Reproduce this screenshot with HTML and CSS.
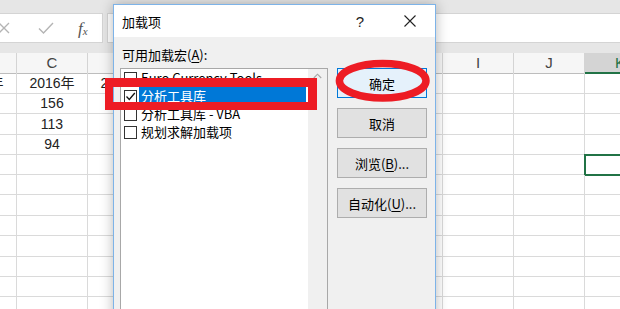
FILE: index.html
```html
<!DOCTYPE html>
<html lang="zh-CN">
<head>
<meta charset="utf-8">
<title>加载项</title>
<link rel="stylesheet" href="styles.css">
</head>
<body>
<div class="app">
  <div class="topstrip"></div>
  <div class="fbar">
    <div class="fbtns">
      <svg class="ico ico-x" width="12" height="12" viewBox="0 0 12 12"><path d="M1 1L11 11M11 1L1 11" stroke="#b4b4b4" stroke-width="1.3" fill="none"/></svg>
      <svg class="ico ico-ok" width="16" height="12" viewBox="0 0 16 12"><path d="M1 6.5L5.5 11L15 1" stroke="#b4b4b4" stroke-width="1.4" fill="none"/></svg>
      <span class="fx">f<sub>x</sub></span>
    </div>
    <div class="finput"></div>
  </div>
  <div class="gap"></div>
  <div class="sheet">
    <div class="row head"><div>B</div><div>C</div><div>D</div><div>E</div><div>F</div><div>G</div><div>H</div><div>I</div><div>J</div><div class="sel">K</div></div>
    <div class="row"><div>2015年</div><div>2016年</div><div>2017年</div><div></div><div></div><div></div><div></div><div></div><div></div><div></div></div>
    <div class="row"><div></div><div>156</div><div></div><div></div><div></div><div></div><div></div><div></div><div></div><div></div></div>
    <div class="row"><div></div><div>113</div><div></div><div></div><div></div><div></div><div></div><div></div><div></div><div></div></div>
    <div class="row"><div></div><div>94</div><div></div><div></div><div></div><div></div><div></div><div></div><div></div><div></div></div>
    <div class="row"><div></div><div></div><div></div><div></div><div></div><div></div><div></div><div></div><div></div><div class="active"></div></div>
    <div class="row"><div></div><div></div><div></div><div></div><div></div><div></div><div></div><div></div><div></div><div></div></div>
    <div class="row"><div></div><div></div><div></div><div></div><div></div><div></div><div></div><div></div><div></div><div></div></div>
    <div class="row"><div></div><div></div><div></div><div></div><div></div><div></div><div></div><div></div><div></div><div></div></div>
    <div class="row"><div></div><div></div><div></div><div></div><div></div><div></div><div></div><div></div><div></div><div></div></div>
    <div class="row"><div></div><div></div><div></div><div></div><div></div><div></div><div></div><div></div><div></div><div></div></div>
    <div class="row"><div></div><div></div><div></div><div></div><div></div><div></div><div></div><div></div><div></div><div></div></div>
    <div class="row"><div></div><div></div><div></div><div></div><div></div><div></div><div></div><div></div><div></div><div></div></div>
  </div>

  <div class="dialog">
    <div class="titlebar">
      <span class="title">加载项</span>
      <span class="tb-btn">?</span>
      <span class="tb-btn">
        <svg width="12" height="12" viewBox="0 0 12 12"><path d="M0.5 0.5L11.5 11.5M11.5 0.5L0.5 11.5" stroke="#222" stroke-width="1.1" fill="none"/></svg>
      </span>
    </div>
    <div class="dbody">
      <div class="label">可用加载宏(<u>A</u>):</div>
      <div class="main">
        <div class="listbox">
          <div class="items">
            <div class="item"><span class="cb"></span><span class="txt">Euro Currency Tools</span></div>
            <div class="item selected"><span class="cb">
              <svg width="11" height="11" viewBox="0 0 11 11"><path d="M1.5 5.5L4.3 8.5L9.8 2" stroke="#111" stroke-width="1.3" fill="none"/></svg>
            </span><span class="txt">分析工具库</span></div>
            <div class="item"><span class="cb"></span><span class="txt">分析工具库 - VBA</span></div>
            <div class="item"><span class="cb"></span><span class="txt">规划求解加载项</span></div>
          </div>
          <div class="scroll">
            <svg width="9" height="6" viewBox="0 0 9 6"><path d="M0.8 5L4.5 1.2L8.2 5" stroke="#a6a6a6" stroke-width="1.1" fill="none"/></svg>
          </div>
        </div>
        <div class="buttons">
          <div class="btn default">确定</div>
          <div class="btn">取消</div>
          <div class="btn">浏览(<u>B</u>)...</div>
          <div class="btn">自动化(<u>U</u>)...</div>
        </div>
      </div>
    </div>
  </div>

  <div class="mark-rect"></div>
  <svg class="mark-ellipse" width="104" height="54" viewBox="0 0 104 54">
    <ellipse cx="50.7" cy="26.7" rx="43.3" ry="17.3" fill="none" stroke="#ed1c24" stroke-width="7.5"/>
  </svg>
</div>
</body>
</html>
```
FILE: styles.css
```css
* { box-sizing: border-box; margin: 0; padding: 0; }
html, body { width: 620px; height: 309px; overflow: hidden; background: #fff; }
body { font-family: "Liberation Sans", "Noto Sans CJK SC", sans-serif; }

.app { position: relative; width: 620px; height: 309px; overflow: hidden; background: #fff; }

.topstrip { height: 13px; background: #e6e6e6; }

.fbar { display: flex; gap: 4px; height: 30px; background: #e6e6e6; }
.fbtns {
  width: 103px; background: #fff;
  border: 1px solid #d4d4d4; border-left: none;
  display: flex; align-items: center; position: relative;
}
.ico-x { margin-left: -2px; }
.ico-ok { margin-left: 28px; }
.fx {
  margin-left: 24px; font-family: "Liberation Serif", serif; font-style: italic;
  font-size: 17px; color: #555; line-height: 1;
}
.fx sub { font-size: 11px; vertical-align: -1px; }
.finput { flex: 1; background: #fff; border: 1px solid #d4d4d4; border-right: none; }

.gap { height: 10px; background: #e6e6e6; }

.sheet { margin-left: -54px; }
.row {
  display: grid; grid-template-columns: repeat(10, 71px); height: 20.4px;
}
.row > div {
  border-right: 1px solid #dadada; border-bottom: 1px solid #dadada;
  text-align: center; font-size: 14px; line-height: 20px; color: #222;
  font-family: "Liberation Sans", "Noto Sans CJK SC", sans-serif;
  white-space: nowrap;
}
.row.head { height: 20px; background: #f6f6f6; }
.row.head > div { color: #444; border-right-color: #d4d4d4; border-bottom-color: #bdbdbd; line-height: 19px; font-size: 15px; }
.row.head > div.sel { background: #d4d4d4; color: #217346; border-bottom: 2px solid #217346; }
.row > div.active { outline: 2px solid #217346; outline-offset: -1px; }

/* dialog (window over the sheet) */
.dialog {
  position: absolute; left: 113px; top: 4px; width: 323px; height: 330px;
  background: #f0f0f0; border: 1px solid #7db3e8;
  box-shadow: 0 0 12px rgba(0,0,0,0.28);
  font-family: "Noto Sans CJK SC", sans-serif; color: #000;
}
.titlebar { height: 32px; background: #fff; display: flex; align-items: center; }
.title { flex: 1; padding-left: 8px; font-size: 13px; }
.tb-btn { width: 50px; height: 32px; display: flex; align-items: center; justify-content: center; font-size: 15px; font-family: "Liberation Sans", sans-serif; color: #222; }

.dbody { padding: 9px 7px 0 6px; }
.label { margin-left: 2px; font-size: 13px; line-height: 18px; height: 18px; }
.label u, .btn u { text-underline-offset: 2px; }
.main { display: flex; gap: 9px; margin-top: 4px; }

.listbox {
  width: 208px; height: 260px; background: #fff; border: 1px solid #a8a8a8;
  display: flex;
}
.items { flex: 1; padding-top: 0; }
.item { display: flex; align-items: center; height: 18px; font-size: 13px; }
.cb {
  width: 13px; height: 13px; border: 1px solid #333; background: #fff;
  margin-left: 3px; margin-right: 2px; flex: none;
  display: flex; align-items: center; justify-content: center;
}
.txt { flex: 1; padding-left: 2px; margin-right: 2px; height: 18px; line-height: 18px; white-space: nowrap; overflow: hidden; }
.item.selected .txt { background: #0078d7; color: #fff; }
.scroll { width: 19px; background: #f0f0f0; display: flex; justify-content: center; padding-top: 4px; }
.scroll svg { display: block; }

.buttons { display: flex; flex-direction: column; gap: 10px; }
.btn {
  width: 90px; height: 30px; background: #e1e1e1; border: 1px solid #adadad;
  display: flex; align-items: center; justify-content: center; font-size: 13px;
}
.btn.default { background: #e5f1fb; border-color: #0078d7; }

/* annotations drawn over the screenshot */
.mark-rect {
  position: absolute; left: 105px; top: 78px; width: 212px; height: 32px;
  border-style: solid; border-color: #ed1c24; border-width: 9px 9px 8px 8px;
}
.mark-ellipse { position: absolute; left: 332px; top: 54px; }
```
